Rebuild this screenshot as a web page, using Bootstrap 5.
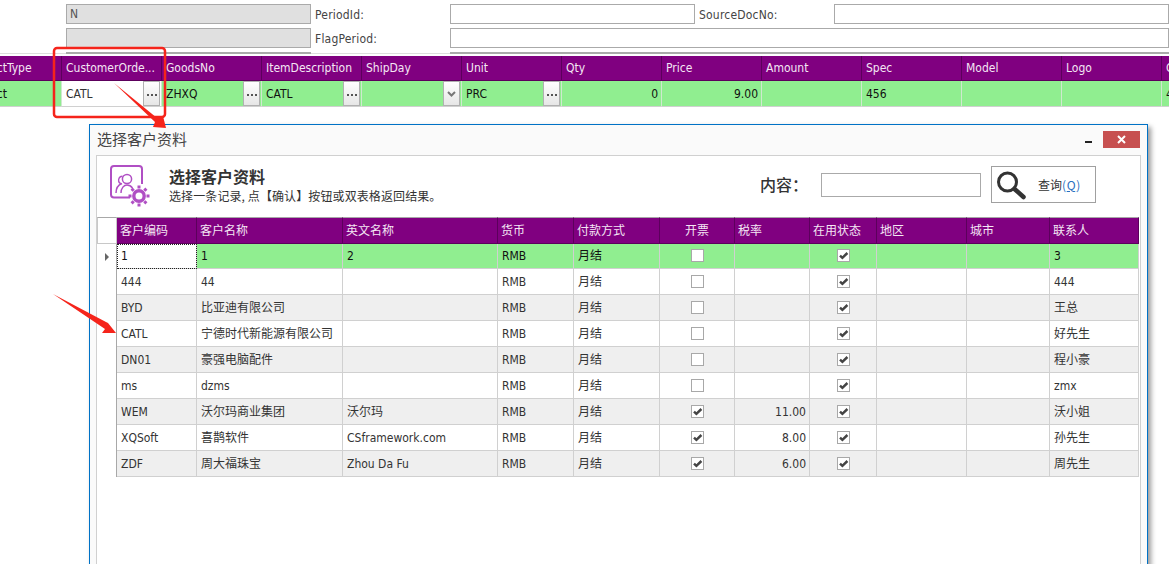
<!DOCTYPE html>
<html lang="zh">
<head>
<meta charset="utf-8">
<title>选择客户资料</title>
<link href="https://cdn.jsdelivr.net/npm/bootstrap@5.3.0/dist/css/bootstrap.min.css" rel="stylesheet">
<style>
html,body{height:564px;overflow:hidden;background:#fff}
body{font-family:"DejaVu Sans Condensed","DejaVu Sans","Noto Sans CJK SC",sans-serif;font-size:12px;color:#333;position:relative}
.app-top{height:56px;padding-top:4px;overflow:hidden}
.form-line{display:flex;height:20px;margin-bottom:4px;align-items:center;padding-left:66px}
.fld{border:1px solid #aaa;border-radius:0;height:20px;padding:0 3px;font-size:12px;color:#555;background:#fff;display:block;outline:0}
.fld:disabled{background:#e0e0e0}
.w-a{width:245px;flex:none}.w-open{flex:1 1 0;min-width:0}
.lbl{color:#444;padding:2px 0 0 4px;width:139px;flex:none;letter-spacing:.2px}
.sliver{display:flex;height:2px;border-bottom:1px solid #ddd;padding-left:66px}
.sliver i{display:block;height:2px;background:#aaa}
.sl-a{width:245px;margin-right:139px}.sl-b{flex:1}
.main-clip{overflow:hidden;width:1169px}
.gt{border-collapse:separate;border-spacing:0;table-layout:fixed}
.gt th,.gt td{padding:0 4px;white-space:nowrap;overflow:hidden;font-weight:400}
.gt th{background:#800080;color:#f4e6f4;border-right:1px solid #5c005c;border-bottom:1px solid #5c005c}
.main-t{width:1300px;margin-left:-38px}
.main-t col{width:100px}
.main-t th{height:25px}
.main-t td{height:26px;background:#90ee90;color:#111;border-right:1px solid #cfe8cf;border-bottom:1px solid #d0d0d0}
.main-t td.edit{background:#fff;color:#333}
.main-t td.num{padding-right:3px}
.with-btn{position:relative}
.cellbtn{position:absolute;right:1px;top:0;width:17px;height:25px;border:1px solid #b0b0b0;background:linear-gradient(#fff,#e6e6e6);display:flex;align-items:center;justify-content:center}
.cellbtn svg{display:block}
.num{text-align:right}
.win{position:absolute;left:89px;top:124px;width:1059px;height:480px;background:#fafafa;border:1px solid #0072c6;box-shadow:3px 3px 5px rgba(0,0,0,.4);display:flex;flex-direction:column}
.win-bar{height:30px;flex:none;display:flex;align-items:flex-start;padding:6px 0 0 7px;position:relative}
.win-title{font-family:"Noto Sans CJK SC",sans-serif;font-size:15px;color:#444;line-height:15px}
.win-min{position:absolute;left:995px;top:16px;width:7px;height:2px;background:#222}
.win-close{position:absolute;left:1013px;top:6px;width:37px;height:17px;background:#c75050;display:flex;align-items:center;justify-content:center}
.pane{flex:1;margin:0 6px;background:#fff;border:1px solid #d0d0d0;display:flex;flex-direction:column}
.pane-head{height:61px;flex:none;position:relative;display:flex}
.app-icon{margin:9px 0 0 13px;flex:none;display:block}
.head-text{margin:9px 0 0 18px;font-family:"Noto Sans CJK SC",sans-serif;width:591px}
.head-title{font-size:16px;font-weight:700;color:#333;line-height:22px}
.head-sub{font-size:12px;color:#333;line-height:18px;white-space:nowrap;letter-spacing:.1px}
.srch-lab{font-family:"Noto Sans CJK SC",sans-serif;font-size:16px;font-weight:500;color:#333;margin:16px 0 0 0;width:61px;line-height:24px;white-space:nowrap}
.srch-in{width:160px;height:24px;border:1px solid #aaa;margin-top:17px;background:#fff;outline:0;padding:0 3px}
.srch-btn{margin:10px 0 0 10px;width:105px;height:37px;border:1px solid #a0a0a0;background:#fff;display:flex;align-items:center;padding:0;font-family:"Noto Sans CJK SC",sans-serif;font-size:12px;color:#333}
.srch-btn svg{margin-left:5px;flex:none}
.srch-btn span{margin-left:8px}
.srch-btn em{font-style:normal;color:#2a6fc0;letter-spacing:.6px}
.dlg-t{width:1042px;font-family:"DejaVu Sans Condensed","DejaVu Sans","Noto Sans CJK SC",sans-serif;color:#333}
.dlg-t thead th{height:27px;border-top:1px solid #a8a8a8}
.dlg-t th.ind{background:#fff;border-right:1px solid #c8c8c8;border-bottom:1px solid #c8c8c8;border-left:1px solid #c8c8c8}
.dlg-t td{height:26px;border-right:1px solid #d0d0d0;border-bottom:1px solid #d0d0d0;background:#fff;padding:0 4px}
.dlg-t tr:not(.sel) td:not(.ctr):not(.ind){padding-top:1px}
.dlg-t th{padding:0 3px}
.dlg-t td.ind{background:#fff;border-right:1px solid #a8a8a8;border-bottom:0;padding:0;position:relative}
.dlg-t td.num{padding-right:3px}
.dlg-t tr.sel td{height:25px;background:#90ee90;color:#111}
.dlg-t tr.sel td.ind{background:#fff}
.dlg-t tr.sel td.cur{background:#fff;outline:1px dotted #222;outline-offset:-1px}
.dlg-t tr.alt td:not(.ind){background:#efefef}
.c0{width:20px}.c1{width:80px}.c2{width:146px}.c3{width:155px}.c4{width:76px}.c5{width:86px}.c6{width:75px}.c7{width:75px}.c8{width:67px}.c9{width:90px}.c10{width:83px}.c11{width:89px}
.ctr{text-align:center}
.ckb{display:inline-block;width:13px;height:13px;border:1px solid #a8a8a8;background:#fff;vertical-align:middle;position:relative;top:-1px}
.ckb svg{display:block}
.tri{position:absolute;left:8px;top:9px;width:0;height:0;border-left:4px solid #666;border-top:4px solid transparent;border-bottom:4px solid transparent}
.marks{position:absolute;left:0;top:0;pointer-events:none;display:block}
</style>
</head>
<body>
<svg width="0" height="0" class="d-block position-absolute">
  <defs>
    <symbol id="tick" viewBox="0 0 11 11"><path d="M2 5.6 L4.4 7.8 L9.4 3" fill="none" stroke="#444" stroke-width="2.5"/></symbol>
    <symbol id="dots" viewBox="0 0 15 23"><path d="M3 12h2v2H3zM7 12h2v2H7zM11 12h2v2h-2z" fill="#555"/></symbol>
  </defs>
</svg>

<div class="app-top">
  <div class="form-line">
    <input class="fld w-a" disabled value="N"><span class="lbl">PeriodId:</span>
    <input class="fld w-a"><span class="lbl">SourceDocNo:</span>
    <input class="fld w-open">
  </div>
  <div class="form-line">
    <input class="fld w-a" disabled><span class="lbl">FlagPeriod:</span>
    <input class="fld w-open">
  </div>
  <div class="sliver"><i class="sl-a"></i><i class="sl-b"></i></div>
</div>

<div class="main-clip">
<table class="gt main-t">
  <colgroup><col><col><col><col><col><col><col><col><col><col><col><col><col></colgroup>
  <thead><tr><th>ProductType</th><th>CustomerOrde...</th><th>GoodsNo</th><th>ItemDescription</th><th>ShipDay</th><th>Unit</th><th>Qty</th><th>Price</th><th>Amount</th><th>Spec</th><th>Model</th><th>Logo</th><th>Color</th></tr></thead>
  <tbody><tr>
    <td>Product</td>
    <td class="edit with-btn">CATL<span class="cellbtn"><svg width="15" height="23"><use href="#dots"/></svg></span></td>
    <td class="with-btn">ZHXQ<span class="cellbtn"><svg width="15" height="23"><use href="#dots"/></svg></span></td>
    <td class="with-btn">CATL<span class="cellbtn"><svg width="15" height="23"><use href="#dots"/></svg></span></td>
    <td class="with-btn"><span class="cellbtn"><svg width="11" height="8" viewBox="0 0 11 8"><path d="M2 2 L5.5 5.5 L9 2" fill="none" stroke="#777" stroke-width="2"/></svg></span></td>
    <td class="with-btn">PRC<span class="cellbtn"><svg width="15" height="23"><use href="#dots"/></svg></span></td>
    <td class="num">0</td><td class="num">9.00</td><td></td><td>456</td><td></td><td></td><td>4</td>
  </tr></tbody>
</table>
</div>

<div class="win">
  <div class="win-bar">
    <span class="win-title">选择客户资料</span>
    <span class="win-min"></span>
    <span class="win-close"><svg width="11" height="9" viewBox="0 0 11 9"><path d="M2 1 L9 8 M9 1 L2 8" stroke="#fff" stroke-width="2" fill="none"/></svg></span>
  </div>
  <div class="pane">
    <div class="pane-head">
      <svg class="app-icon" width="41" height="42" viewBox="0 0 41 42" fill="none" stroke="#b04fc4">
        <path d="M20 32.5H4a3 3 0 0 1-3-3V4a3 3 0 0 1 3-3h25a3 3 0 0 1 3 3v15" stroke-width="2"/>
        <circle cx="17" cy="14" r="4.6" stroke-width="1.5"/>
        <path d="M12.5 11.2a3.9 3.9 0 0 0-1.2 7.6" stroke-width="1.4"/>
        <path d="M6 28c0-5 2-8 6-9.5M11 28c0-5 3-8 6-8 2 0 4 1 5.5 3" stroke-width="1.5"/>
        <path d="M29 20.5v3M29 38.5v3M18.5 31h3M36.5 31h3M21.6 23.6l2.1 2.1M34.3 36.3l2.1 2.1M21.6 38.4l2.1-2.1M34.3 25.7l2.1-2.1" stroke-width="3"/>
        <circle cx="29" cy="31" r="5.2" stroke-width="3.4"/>
      </svg>
      <div class="head-text">
        <div class="head-title">选择客户资料</div>
        <div class="head-sub">选择一条记录, 点【确认】按钮或双表格返回结果。</div>
      </div>
      <div class="srch-lab">内容：</div>
      <input class="srch-in">
      <button type="button" class="srch-btn">
        <svg width="33" height="30" viewBox="0 0 33 30" fill="none" stroke="#333"><circle cx="10.5" cy="12" r="9" stroke-width="3"/><path d="M17.5 19l9 8" stroke-width="4.5" stroke-linecap="round"/></svg>
        <span>查询<em>(<u>Q</u>)</em></span>
      </button>
    </div>
    <table class="gt dlg-t">
      <colgroup><col class="c0"><col class="c1"><col class="c2"><col class="c3"><col class="c4"><col class="c5"><col class="c6"><col class="c7"><col class="c8"><col class="c9"><col class="c10"><col class="c11"></colgroup>
      <thead><tr><th class="ind"></th><th>客户编码</th><th>客户名称</th><th>英文名称</th><th>货币</th><th>付款方式</th><th class="ctr">开票</th><th>税率</th><th>在用状态</th><th>地区</th><th>城市</th><th>联系人</th></tr></thead>
      <tbody>
        <tr class="sel"><td class="ind"><span class="tri"></span></td><td class="cur">1</td><td>1</td><td>2</td><td>RMB</td><td>月结</td><td class="ctr"><span class="ckb"></span></td><td></td><td class="ctr"><span class="ckb"><svg width="11" height="11"><use href="#tick"/></svg></span></td><td></td><td></td><td>3</td></tr>
        <tr><td class="ind"></td><td>444</td><td>44</td><td></td><td>RMB</td><td>月结</td><td class="ctr"><span class="ckb"></span></td><td></td><td class="ctr"><span class="ckb"><svg width="11" height="11"><use href="#tick"/></svg></span></td><td></td><td></td><td>444</td></tr>
        <tr class="alt"><td class="ind"></td><td>BYD</td><td>比亚迪有限公司</td><td></td><td>RMB</td><td>月结</td><td class="ctr"><span class="ckb"></span></td><td></td><td class="ctr"><span class="ckb"><svg width="11" height="11"><use href="#tick"/></svg></span></td><td></td><td></td><td>王总</td></tr>
        <tr><td class="ind"></td><td>CATL</td><td>宁德时代新能源有限公司</td><td></td><td>RMB</td><td>月结</td><td class="ctr"><span class="ckb"></span></td><td></td><td class="ctr"><span class="ckb"><svg width="11" height="11"><use href="#tick"/></svg></span></td><td></td><td></td><td>好先生</td></tr>
        <tr class="alt"><td class="ind"></td><td>DN01</td><td>豪强电脑配件</td><td></td><td>RMB</td><td>月结</td><td class="ctr"><span class="ckb"></span></td><td></td><td class="ctr"><span class="ckb"><svg width="11" height="11"><use href="#tick"/></svg></span></td><td></td><td></td><td>程小豪</td></tr>
        <tr><td class="ind"></td><td>ms</td><td>dzms</td><td></td><td>RMB</td><td>月结</td><td class="ctr"><span class="ckb"></span></td><td></td><td class="ctr"><span class="ckb"><svg width="11" height="11"><use href="#tick"/></svg></span></td><td></td><td></td><td>zmx</td></tr>
        <tr class="alt"><td class="ind"></td><td>WEM</td><td>沃尔玛商业集团</td><td>沃尔玛</td><td>RMB</td><td>月结</td><td class="ctr"><span class="ckb"><svg width="11" height="11"><use href="#tick"/></svg></span></td><td class="num">11.00</td><td class="ctr"><span class="ckb"><svg width="11" height="11"><use href="#tick"/></svg></span></td><td></td><td></td><td>沃小姐</td></tr>
        <tr><td class="ind"></td><td>XQSoft</td><td>喜鹊软件</td><td>CSframework.com</td><td>RMB</td><td>月结</td><td class="ctr"><span class="ckb"><svg width="11" height="11"><use href="#tick"/></svg></span></td><td class="num">8.00</td><td class="ctr"><span class="ckb"><svg width="11" height="11"><use href="#tick"/></svg></span></td><td></td><td></td><td>孙先生</td></tr>
        <tr class="alt"><td class="ind"></td><td>ZDF</td><td>周大福珠宝</td><td>Zhou Da Fu</td><td>RMB</td><td>月结</td><td class="ctr"><span class="ckb"><svg width="11" height="11"><use href="#tick"/></svg></span></td><td class="num">6.00</td><td class="ctr"><span class="ckb"><svg width="11" height="11"><use href="#tick"/></svg></span></td><td></td><td></td><td>周先生</td></tr>
      </tbody>
    </table>
  </div>
</div>

<svg class="marks" width="1169" height="564" viewBox="0 0 1169 564">
  <rect x="54" y="48" width="111" height="69" rx="3" fill="none" stroke="#f5241b" stroke-width="2.5"/>
  <polygon points="114,83 157,118 163,116 166,128 153,127 155,122" fill="#f5241b"/>
  <polygon points="53,294 106,322 108,323 116,333 102,333 105,329" fill="#f5241b"/>
</svg>
<script src="https://cdn.jsdelivr.net/npm/bootstrap@5.3.0/dist/js/bootstrap.bundle.min.js"></script>
</body>
</html>
